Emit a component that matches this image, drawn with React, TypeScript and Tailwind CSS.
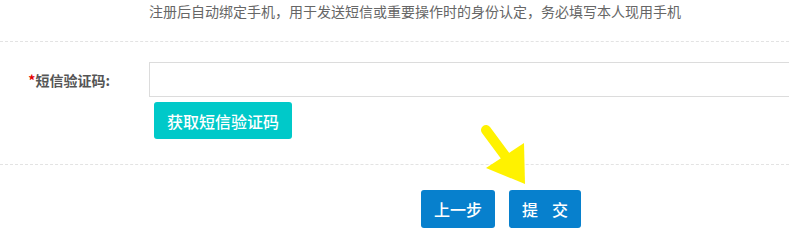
import React from "react";

export default function App() {
  const font = { fontFamily: '"Noto Sans CJK SC", "Noto Sans", sans-serif' };
  return (
    <div
      className="relative w-[789px] h-[238px] bg-white overflow-hidden"
      style={font}
    >
      <div className="h-[41px] pl-[149px] pt-[1px]">
        <p className="text-[14px] leading-[20px] text-[#666]">
          注册后自动绑定手机，用于发送短信或重要操作时的身份认定，务必填写本人现用手机
        </p>
      </div>
      <div className="border-t border-dashed border-[#e3e3e3]" />
      <div className="flex pt-[20px] pb-[25px]">
        <div className="w-[149px] shrink-0 flex justify-end pr-[39px] h-[35px] items-center">
          <span className="text-[14px] font-bold text-[#555] leading-none">
            <span className="text-[#e60000]">*</span>短信验证码:
          </span>
        </div>
        <div className="flex flex-col items-start gap-[5px]">
          <input
            className="w-[700px] h-[35px] border border-[#dcdcdc] outline-none px-2 text-[14px]"
            type="text"
          />
          <button className="ml-[5px] h-[37px] w-[138px] rounded-[3px] bg-[#00c9c9] text-white text-[16px] font-medium leading-none">
            获取短信验证码
          </button>
        </div>
      </div>
      <div className="border-t border-dashed border-[#e3e3e3]" />
      <div className="flex pt-[25px] pl-[421px] gap-[14px]">
        <button className="h-[38px] w-[74px] rounded-[3px] bg-[#0780cd] text-white text-[16px] font-medium leading-none">
          上一步
        </button>
        <button className="h-[38px] w-[72px] rounded-[3px] bg-[#0780cd] text-white text-[16px] font-medium leading-none flex items-center justify-center gap-[14px]">
          <span>提</span>
          <span>交</span>
        </button>
      </div>
      <svg
        className="absolute left-0 top-0 pointer-events-none"
        width="789"
        height="238"
        viewBox="0 0 789 238"
      >
        <line
          x1="486"
          y1="130"
          x2="506"
          y2="157"
          stroke="#fff200"
          strokeWidth="10"
          strokeLinecap="round"
        />
        <polygon points="486,168 524,143 525,184" fill="#fff200" />
      </svg>
    </div>
  );
}
